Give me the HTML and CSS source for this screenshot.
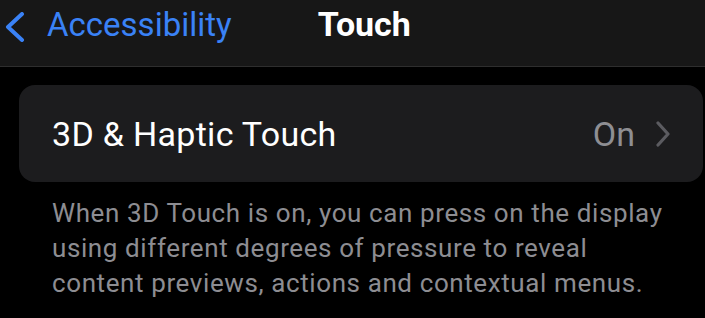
FILE: index.html
```html
<!DOCTYPE html>
<html>
<head>
<meta charset="utf-8">
<link rel="stylesheet" href="styles.css">
</head>
<body>
<header class="nav">
  <a class="back">
    <svg class="back-chevron" width="26" height="30" viewBox="0 0 26 30">
      <path d="M20 2 L6 15 L20 28" fill="none" stroke="#3a82f6" stroke-width="4" stroke-linecap="round" stroke-linejoin="round"/>
    </svg>
    <span class="back-label">Accessibility</span>
  </a>
  <h1 class="title">Touch</h1>
</header>
<main class="content">
  <div class="card">
    <div class="row">
      <span class="row-label">3D &amp; Haptic Touch</span>
      <span class="row-value">On</span>
      <svg class="row-chevron" width="16" height="26" viewBox="0 0 16 26">
        <path d="M3 2 L13 13 L3 24" fill="none" stroke="#5b5b60" stroke-width="3.2" stroke-linecap="round" stroke-linejoin="round"/>
      </svg>
    </div>
  </div>
  <p class="footer">When 3D Touch is on, you can press on the display using different degrees of pressure to reveal content previews, actions and contextual menus.</p>
</main>
</body>
</html>
```
FILE: styles.css
```css
html, body {
  margin: 0;
  padding: 0;
  background: #000;
  font-family: Roboto, "Liberation Sans", sans-serif;
  width: 705px;
  height: 318px;
  overflow: hidden;
}

.nav {
  height: 66px;
  background: #171717;
  border-bottom: 1px solid #2e2e2e;
  display: flex;
  align-items: center;
  box-sizing: content-box;
}

.back {
  display: flex;
  align-items: center;
  padding-left: 2px;
  color: #3a82f6;
  margin-top: -18px;
}

.back-chevron {
  display: block;
  margin-top: 6px;
}

.back-label {
  font-size: 33px;
  margin-left: 19px;
}

.title {
  margin: -18px 0 0 86px;
  font-size: 34px;
  font-weight: 700;
  color: #fff;
}

.content {
  padding: 18px 2px 0 19px;
}

.card {
  background: #1c1c1e;
  border-radius: 16px;
  height: 97px;
}

.row {
  height: 100%;
  display: flex;
  align-items: center;
  padding: 0 32px 0 33px;
}

.row-label {
  flex: 1;
  color: #fff;
  font-size: 34px;
  letter-spacing: 0.3px;
}

.row-value {
  color: #8e8e93;
  font-size: 34px;
  margin-right: 20px;
}

.row-chevron {
  display: block;
}

.footer {
  margin: 14px 0 0 33px;
  color: #8d8d92;
  font-size: 26px;
  letter-spacing: 0.6px;
  line-height: 35px;
  width: 620px;
}
```
